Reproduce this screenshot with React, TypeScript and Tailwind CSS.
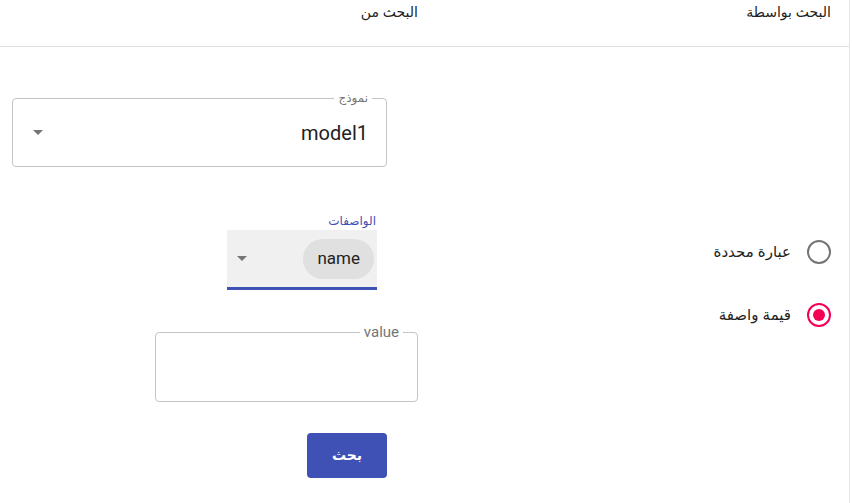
import React from "react";

const Arrow = () => (
  <svg width="10" height="5" viewBox="0 0 10 5" className="block">
    <path d="M0 0 L5 5 L10 0 Z" fill="#757575" />
  </svg>
);

export default function App() {
  return (
    <div
      className="w-[853px] h-[503px] bg-white overflow-hidden"
      style={{ fontFamily: '"Liberation Sans", "DejaVu Sans", sans-serif' }}
    >
      <div className="w-[850px] h-[503px] border-r border-[#e6e6e6] flex flex-col" dir="rtl">
        {/* header */}
        <div className="h-[47px] border-b border-[#e0e0e0] flex text-[14px] text-[#222]">
          <div className="w-[424px] pr-[18px] pt-[2px]">البحث بواسطة</div>
          <div className="flex-1 pr-[7px] pt-[2px]">البحث من</div>
        </div>
        {/* body */}
        <div className="flex flex-1">
          {/* right column: radios */}
          <div className="w-[424px] pt-[193px] pr-[18px] flex flex-col gap-[39px]">
            <label className="flex items-center gap-[16px] h-[24px]">
              <span className="w-[24px] h-[24px] rounded-full border-2 border-[#757575] box-border" />
              <span className="text-[15px] text-[#222]">عبارة محددة</span>
            </label>
            <label className="flex items-center gap-[16px] h-[24px]">
              <span className="w-[24px] h-[24px] rounded-full border-2 border-[#f50057] box-border flex items-center justify-center">
                <span className="w-[12px] h-[12px] rounded-full bg-[#f50057]" />
              </span>
              <span className="text-[15px] text-[#222]">قيمة واصفة</span>
            </label>
          </div>
          {/* left column: form */}
          <div className="flex-1 flex flex-col items-start">
            {/* outlined select */}
            <div className="relative mt-[51px] mr-[38px] w-[375px] h-[69px] border border-[#c4c4c4] rounded-[4px] flex items-center justify-between pr-[18px] pl-[20px]">
              <span className="absolute -top-[9px] right-[14px] bg-white px-[4px] text-[12px] text-[#757575] leading-[16px]">
                نموذج
              </span>
              <span className="text-[20px] text-[#222]" style={{ fontFamily: "Roboto, sans-serif" }}>
                model1
              </span>
              <Arrow />
            </div>
            {/* filled select */}
            <div className="mt-[45px] mr-[48px] w-[150px] flex flex-col">
              <span className="text-[12px] text-[#3f51b5] leading-[18px] pr-[1px]">الواصفات</span>
              <div className="h-[60px] bg-[#f0f0f0] border-b-[3px] border-[#3f51b5] flex items-center justify-between pr-[3px] pl-[10px] box-border">
                <span
                  className="h-[40px] px-[14px] rounded-full bg-[#e0e0e0] flex items-center text-[17px] text-[#222]"
                  style={{ fontFamily: "Roboto, sans-serif" }}
                >
                  name
                </span>
                <Arrow />
              </div>
            </div>
            {/* outlined text field */}
            <div className="relative mt-[42px] mr-[7px] w-[263px] h-[70px] border border-[#c4c4c4] rounded-[4px]">
              <span
                className="absolute -top-[10px] right-[14px] bg-white px-[4px] text-[15px] text-[#757575] leading-[18px]"
                style={{ fontFamily: "Roboto, sans-serif" }}
              >
                value
              </span>
            </div>
            {/* button */}
            <button className="mt-[31px] mr-[38px] w-[80px] h-[45px] bg-[#3f51b5] rounded-[4px] text-white text-[14px] font-bold">
              بحث
            </button>
          </div>
        </div>
      </div>
    </div>
  );
}
